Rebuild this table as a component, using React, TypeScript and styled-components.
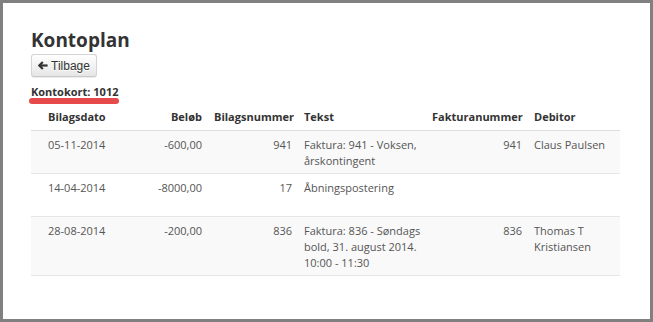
import React from 'react';
import styled, { createGlobalStyle } from 'styled-components';

interface Posting {
	date: string;
	amount: string;
	voucher: string;
	text: string;
	invoice: string;
	debtor: string;
}

const postings: Posting[] = [
	{
		date: '05-11-2014',
		amount: '-600,00',
		voucher: '941',
		text: 'Faktura: 941 - Voksen, årskontingent',
		invoice: '941',
		debtor: 'Claus Paulsen'
	},
	{
		date: '14-04-2014',
		amount: '-8000,00',
		voucher: '17',
		text: 'Åbningspostering',
		invoice: '',
		debtor: ''
	},
	{
		date: '28-08-2014',
		amount: '-200,00',
		voucher: '836',
		text: 'Faktura: 836 - Søndags bold, 31. august 2014. 10:00 - 11:30',
		invoice: '836',
		debtor: 'Thomas T Kristiansen'
	}
];

const columns: { label: string; width: number; right?: boolean }[] = [
	{ label: 'Bilagsdato', width: 99 },
	{ label: 'Beløb', width: 78, right: true },
	{ label: 'Bilagsnummer', width: 90, right: true },
	{ label: 'Tekst', width: 128 },
	{ label: 'Fakturanummer', width: 102, right: true },
	{ label: 'Debitor', width: 92 }
];

// bold left arrow, like the icon font glyph in the original
const ArrowLeft = () => (
	<svg width="10" height="9" viewBox="0 0 10 9" aria-hidden="true">
		<path
			d="M4.8 0.9 L1.3 4.5 L4.8 8.1"
			fill="none"
			stroke="#333"
			strokeWidth="2.2"
		/>
		<path d="M1.8 4.5 H9.6" stroke="#333" strokeWidth="2.2" />
	</svg>
);

export default function App() {
	return (
		<>
			<GlobalStyle />
			<Frame>
				<Title>Kontoplan</Title>
				<BackButton type="button">
					<ArrowLeft />
					Tilbage
				</BackButton>
				<AccountLabel>
					Kontokort: 1012
					<Marker />
				</AccountLabel>
				<Table>
					<colgroup>
						{columns.map((c) => (
							<col key={c.label} style={{ width: c.width }} />
						))}
					</colgroup>
					<thead>
						<tr>
							{columns.map((c) => (
								<Th key={c.label} $right={c.right}>
									{c.label}
								</Th>
							))}
						</tr>
					</thead>
					<tbody>
						{postings.map((p, i) => (
							<Row key={p.date} $striped={i % 2 === 0}>
								<Td>{p.date}</Td>
								<Td $right>{p.amount}</Td>
								<Td $right>{p.voucher}</Td>
								<Td $wide>{p.text}</Td>
								<Td $right>{p.invoice}</Td>
								<Td $minLines={2}>{p.debtor}</Td>
							</Row>
						))}
					</tbody>
				</Table>
			</Frame>
		</>
	);
}

const GlobalStyle = createGlobalStyle`
	html, body {
		margin: 0;
		padding: 0;
		background: #808080;
	}

	body {
		font-family: 'Open Sans', 'Liberation Sans', sans-serif;
		color: #333;
	}
`;

const Frame = styled.div`
	box-sizing: border-box;
	width: 653px;
	height: 322px;
	border: 3px solid #808080;
	background: #fff;
	padding: 26px 30px 0 28px;
	display: flex;
	flex-direction: column;
	align-items: flex-start;
`;

const Title = styled.h1`
	margin: 0;
	font-size: 19px;
	line-height: 22px;
	font-weight: 700;
	color: #333;
`;

const BackButton = styled.button`
	margin-top: 3px;
	box-sizing: border-box;
	height: 23px;
	width: 66px;
	display: flex;
	align-items: center;
	justify-content: center;
	gap: 3px;
	padding: 0 6px;
	font-family: 'Liberation Sans', Arial, sans-serif;
	font-size: 12px;
	color: #333;
	text-shadow: 0 1px 0 #fff;
	background: linear-gradient(to bottom, #ffffff 0%, #e6e6e6 100%);
	border: 1px solid #d4d4d4;
	border-bottom-color: #c8c8c8;
	border-radius: 3px;
	box-shadow: inset 0 1px 0 rgba(255, 255, 255, 0.15),
		0 1px 1px rgba(0, 0, 0, 0.075);
`;

const AccountLabel = styled.div`
	position: relative;
	margin-top: 7px;
	font-size: 11px;
	line-height: 16px;
	font-weight: 700;
	color: #333;
`;

const Marker = styled.span`
	position: absolute;
	left: -2px;
	top: 14px;
	width: 90px;
	height: 6px;
	border-radius: 3px;
	background: #e64a4a;
`;

const Table = styled.table`
	margin-top: 3px;
	width: 589px;
	table-layout: fixed;
	border-collapse: collapse;
	font-size: 11px;
	line-height: 16px;
`;

const Th = styled.th<{ $right?: boolean }>`
	padding: 6px 6px 5px;
	text-align: ${({ $right }) => ($right ? 'right' : 'left')};
	font-weight: 700;
	color: #333;
	border-bottom: 1px solid #dddddd;
	white-space: nowrap;

	&:first-child {
		padding-left: 17px;
	}
`;

const Row = styled.tr<{ $striped: boolean }>`
	background: ${({ $striped }) => ($striped ? '#f9f9f9' : '#fff')};
	border-bottom: 1px solid #e6e6e6;
`;

const Td = styled.td<{ $right?: boolean; $wide?: boolean; $minLines?: number }>`
	padding: 6px ${({ $wide }) => ($wide ? 0 : 6)}px 4px 6px;
	vertical-align: top;
	text-align: ${({ $right }) => ($right ? 'right' : 'left')};
	color: #555;
	height: ${({ $minLines }) => ($minLines ? $minLines * 16 : 16)}px;

	&:first-child {
		padding-left: 17px;
	}
`;
